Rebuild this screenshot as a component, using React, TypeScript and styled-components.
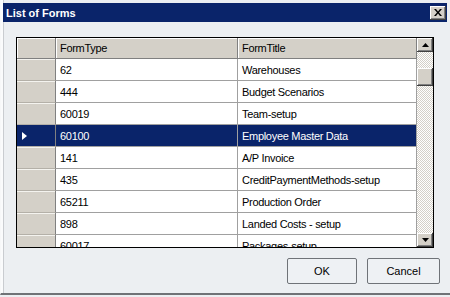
import React from 'react';
import styled, { createGlobalStyle, css } from 'styled-components';

const GlobalStyle = createGlobalStyle`
  html, body {
    margin: 0;
    padding: 0;
    background: #eceff2;
  }
  body {
    font-family: "Liberation Sans", Arial, sans-serif;
    font-size: 11px;
    color: #000;
  }
`;

const rows: [string, string][] = [
  ['62', 'Warehouses'],
  ['444', 'Budget Scenarios'],
  ['60019', 'Team-setup'],
  ['60100', 'Employee Master Data'],
  ['141', 'A/P Invoice'],
  ['435', 'CreditPaymentMethods-setup'],
  ['65211', 'Production Order'],
  ['898', 'Landed Costs - setup'],
  ['60017', 'Packages-setup'],
];

const SELECTED = 3;

const App: React.FC = () => {
  return (
    <>
      <GlobalStyle />
      <Window>
        <TitleBar>
          <Title>List of Forms</Title>
          <CloseButton>
            <svg width="8" height="7" viewBox="0 0 8 7">
              <path d="M0 0h2l2 2.5L6 0h2L5 3.5 8 7H6L4 4.5 2 7H0l3-3.5z" fill="#000" />
            </svg>
          </CloseButton>
        </TitleBar>
        <Body>
          <Grid>
            <Table>
              <HeaderRow>
                <HeaderCell />
                <HeaderCell>FormType</HeaderCell>
                <HeaderCell>FormTitle</HeaderCell>
              </HeaderRow>
              {rows.map(([type, title], i) => (
                <Row key={type} $selected={i === SELECTED}>
                  <RowHeader $selected={i === SELECTED}>
                    {i === SELECTED && <Pointer />}
                  </RowHeader>
                  <Cell>{type}</Cell>
                  <Cell>{title}</Cell>
                </Row>
              ))}
            </Table>
            <ScrollBar>
              <ScrollButton>
                <svg width="7" height="4" viewBox="0 0 7 4">
                  <path d="M3.5 0L7 4H0z" fill="#000" />
                </svg>
              </ScrollButton>
              <Track>
                <Thumb />
              </Track>
              <ScrollButton>
                <svg width="7" height="4" viewBox="0 0 7 4">
                  <path d="M0 0h7L3.5 4z" fill="#000" />
                </svg>
              </ScrollButton>
            </ScrollBar>
          </Grid>
          <ButtonRow>
            <PushButton $width={70}>OK</PushButton>
            <PushButton $width={73}>Cancel</PushButton>
          </ButtonRow>
        </Body>
      </Window>
    </>
  );
};

export default App;

const bevel = css`
  background: #d4d0c8;
  box-shadow: inset -1px -1px 0 #404040, inset 1px 1px 0 #fff, inset -2px -2px 0 #808080;
`;

const Window = styled.div`
  width: 450px;
  height: 295px;
  box-sizing: border-box;
  padding: 3px 3px 0 2px;
  display: flex;
  flex-direction: column;
  background: #eceff2;
  border-left: 1px solid #f7f8f9;
  border-bottom: 2px solid #6f7276;
  box-shadow: inset 2px 0 0 #fafbfc, inset 3px 0 0 #c9ccd0;
`;

const TitleBar = styled.div`
  height: 19px;
  display: flex;
  align-items: center;
  justify-content: space-between;
  background: #0a246a;
  padding: 0 1px 0 3px;
`;

const Title = styled.span`
  color: #fff;
  font-weight: bold;
  font-size: 11px;
`;

const CloseButton = styled.div`
  ${bevel};
  width: 16px;
  height: 14px;
  display: flex;
  align-items: center;
  justify-content: center;
`;

const Body = styled.div`
  flex: 1;
  display: flex;
  flex-direction: column;
  padding-top: 15px;
`;

const Grid = styled.div`
  margin: 0 13px;
  height: 211px;
  display: flex;
  border: 1px solid #000;
  box-sizing: border-box;
  background: #fff;
  overflow: hidden;
`;

const Table = styled.div`
  width: 400px;
  display: flex;
  flex-direction: column;
  overflow: hidden;
  letter-spacing: -0.3px;
`;

const rowColumns = css`
  display: grid;
  grid-template-columns: 39px 182px 179px;
  flex-shrink: 0;
`;

const HeaderRow = styled.div`
  ${rowColumns};
  height: 21px;
`;

const HeaderCell = styled.div`
  background: #d4d0c8;
  box-sizing: border-box;
  border-right: 1px solid #808080;
  border-bottom: 1px solid #808080;
  box-shadow: inset 1px 1px 0 #fff;
  padding-left: 4px;
  display: flex;
  align-items: center;
`;

const Row = styled.div<{ $selected?: boolean }>`
  ${rowColumns};
  height: 22px;
  background: ${p => (p.$selected ? '#0a246a' : '#fff')};
  color: ${p => (p.$selected ? '#fff' : '#000')};
`;

const Cell = styled.div`
  box-sizing: border-box;
  border-right: 1px solid #a0a0a0;
  border-bottom: 1px solid #a0a0a0;
  padding-left: 4px;
  display: flex;
  align-items: center;
  white-space: nowrap;
`;

const RowHeader = styled.div<{ $selected?: boolean }>`
  box-sizing: border-box;
  background: ${p => (p.$selected ? '#0a246a' : '#d4d0c8')};
  border-right: 1px solid #808080;
  border-bottom: 1px solid #b4b0a8;
  box-shadow: ${p => (p.$selected ? 'none' : 'inset 0 1px 0 #f4f3ef')};
  display: flex;
  align-items: center;
  padding-left: 5px;
`;

const Pointer = styled.div`
  width: 0;
  height: 0;
  border-top: 4.5px solid transparent;
  border-bottom: 4.5px solid transparent;
  border-left: 5px solid #fff;
`;

const ScrollBar = styled.div`
  width: 16px;
  display: flex;
  flex-direction: column;
`;

const ScrollButton = styled.div`
  ${bevel};
  height: 14px;
  flex-shrink: 0;
  display: flex;
  align-items: center;
  justify-content: center;
`;

const Track = styled.div`
  flex: 1;
  padding-top: 16px;
  background-color: #fff;
  background-image: repeating-conic-gradient(#d4d0c8 0 25%, #fff 0 50%);
  background-size: 2px 2px;
`;

const Thumb = styled.div`
  ${bevel};
  height: 18px;
`;

const ButtonRow = styled.div`
  display: flex;
  justify-content: flex-end;
  gap: 10px;
  margin-top: 10px;
  padding-right: 7px;
`;

const PushButton = styled.button<{ $width: number }>`
  width: ${p => p.$width}px;
  height: 26px;
  box-sizing: border-box;
  border: 1px solid #6f7378;
  border-radius: 2px;
  background: #eef1f4;
  font-family: "Liberation Sans", Arial, sans-serif;
  font-size: 11px;
  color: #000;
  padding: 0;
`;
